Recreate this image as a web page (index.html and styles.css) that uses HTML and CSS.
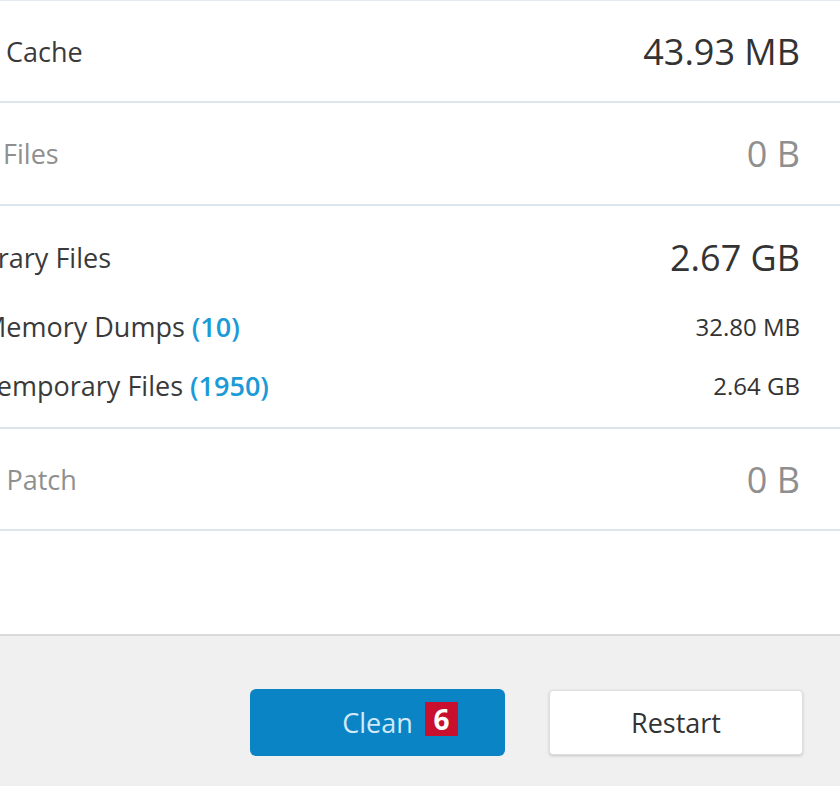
FILE: index.html
```html
<!DOCTYPE html>
<html lang="en">
<head>
<meta charset="utf-8">
<title>Cleanup</title>
<link rel="stylesheet" href="styles.css">
</head>
<body>
<div class="dialog">
  <div class="list">
    <div class="row">
      <span class="label">Shader Cache</span>
      <span class="value">43.93 MB</span>
    </div>
    <div class="row muted">
      <span class="label">Recent Files</span>
      <span class="value">0 B</span>
    </div>
    <div class="group">
      <div class="group-head">
        <span class="label">Temporary Files</span>
        <span class="value">2.67 GB</span>
      </div>
      <div class="sub">
        <span class="label">Memory Dumps <span class="count">(10)</span></span>
        <span class="value small">32.80 MB</span>
      </div>
      <div class="sub">
        <span class="label">Temporary Files <span class="count">(1950)</span></span>
        <span class="value small">2.64 GB</span>
      </div>
    </div>
    <div class="row muted">
      <span class="label">Service Patch</span>
      <span class="value">0 B</span>
    </div>
  </div>
  <div class="spacer"></div>
  <div class="footer">
    <button class="btn btn-primary">Clean<span class="badge">6</span></button>
    <button class="btn btn-secondary">Restart</button>
  </div>
</div>
</body>
</html>
```
FILE: styles.css
```css
html, body {
  margin: 0;
  padding: 0;
  background: #ffffff;
  overflow: hidden;
}
body {
  font-family: "Open Sans", "Noto Sans", "DejaVu Sans", sans-serif;
  color: #3a3a3a;
  width: 840px;
  height: 786px;
}
.dialog {
  display: flex;
  flex-direction: column;
  height: 786px;
  overflow: hidden;
}
.list {
  margin-left: -90px;
  border-top: 1px solid #e3e9ef;
}
.row {
  height: 100px;
  display: flex;
  align-items: center;
  justify-content: space-between;
  padding-right: 40px;
  border-bottom: 2px solid #dde5ec;
}
.row + .row {
  height: 101px;
}
.label {
  font-size: 27px;
  color: #3a3a3a;
  white-space: nowrap;
}
.value {
  font-size: 36px;
  color: #333333;
  white-space: nowrap;
}
.value.small {
  font-size: 24px;
}
.muted .label,
.muted .value {
  color: #8f8f8f;
}
.group {
  height: 223px;
  box-sizing: border-box;
  padding-top: 29px;
  padding-right: 40px;
  border-bottom: 2px solid #dde5ec;
}
.group-head {
  height: 44px;
  display: flex;
  align-items: center;
  justify-content: space-between;
  margin-bottom: 18px;
}
.sub {
  height: 59px;
  display: flex;
  align-items: center;
  justify-content: space-between;
  padding-left: 72px;
}
.count {
  color: #1a9ad6;
  font-weight: 600;
}
.spacer {
  height: 103px;
  flex: none;
}
.footer {
  flex: 1;
  background: #f0f0f0;
  border-top: 2px solid #dadada;
  display: flex;
  justify-content: flex-end;
  align-items: flex-start;
  gap: 44px;
  padding: 53px 37px 0 0;
}
.btn {
  font-family: "Open Sans", "Noto Sans", sans-serif;
  font-size: 27px;
  width: 255px;
  height: 67px;
  border-radius: 6px;
  cursor: pointer;
  padding: 0;
  position: relative;
}
.btn-primary {
  background: #0b84c6;
  border: none;
  color: #d2e9f7;
}
.btn-secondary {
  margin-top: 1px;
  width: 254px;
  height: 65px;
  background: #ffffff;
  border: 1px solid #dedede;
  border-radius: 4px;
  box-shadow: 0 1px 3px rgba(0, 0, 0, 0.18);
  color: #333333;
}
.badge {
  position: absolute;
  left: 175px;
  top: 13px;
  width: 33px;
  height: 34px;
  background: #c8102e;
  color: #ffffff;
  font-weight: 700;
  font-size: 28px;
  line-height: 34px;
  text-align: center;
}
```
